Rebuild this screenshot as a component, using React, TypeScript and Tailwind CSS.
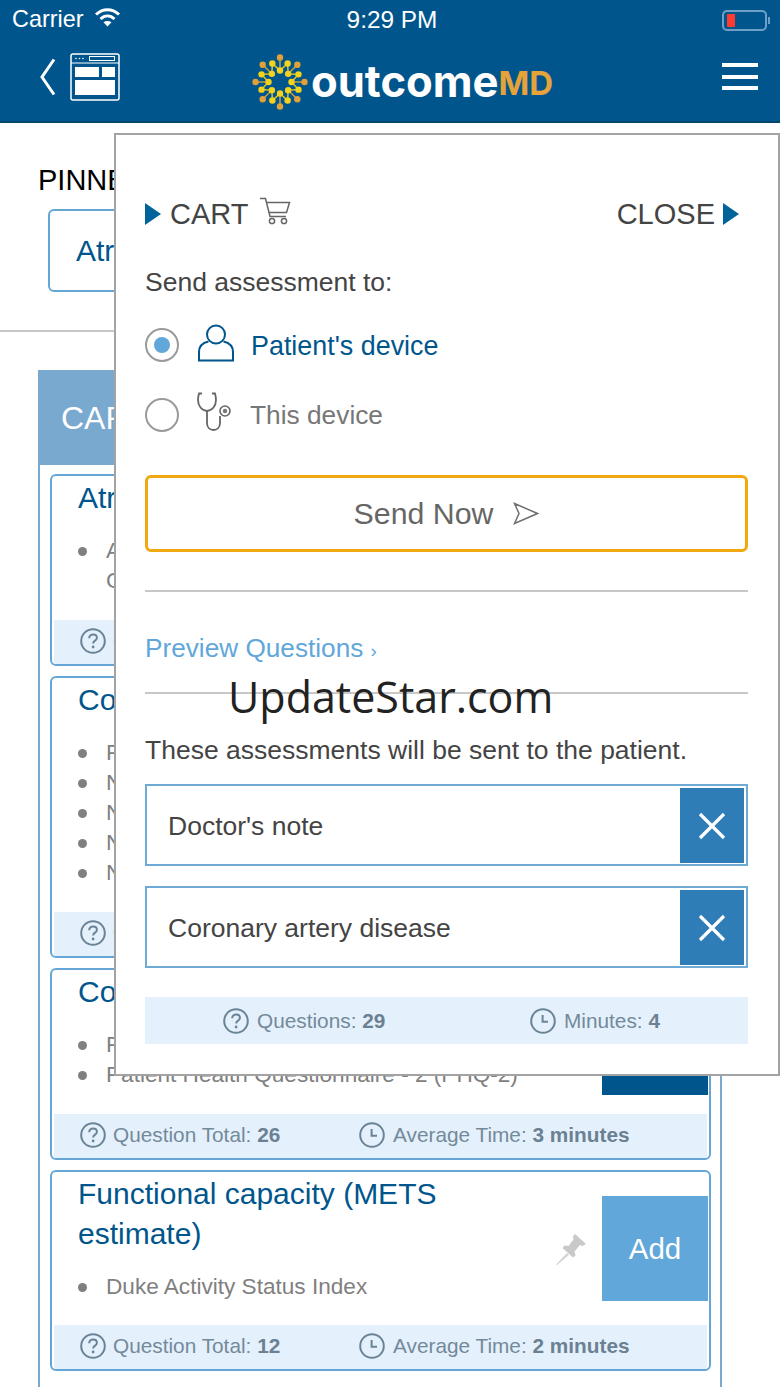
import React from 'react';

const sans = "font-['Liberation_Sans',Arial,sans-serif]";

function Logo() {
  const cx = 30;
  const cy = 30;
  const spots = [0, 1, 2, 3, 4, 5, 6, 7];
  const at = (deg: number, r: number) => {
    const a = ((deg - 90) * Math.PI) / 180;
    return { x: cx + r * Math.cos(a), y: cy + r * Math.sin(a) };
  };
  return (
    <svg width="56" height="56" viewBox="2 2 56 56" className="shrink-0">
      {spots.map((i) => {
        const deg = i * 45;
        const inner = at(deg, 11.5);
        const tip = at(deg, 24.5);
        const left = at(deg - 22.5, 20);
        const right = at(deg + 22.5, 20);
        return (
          <g key={i}>
            <line x1={inner.x} y1={inner.y} x2={tip.x} y2={tip.y} stroke="#e0a63c" strokeWidth="1.3" />
            <line x1={inner.x} y1={inner.y} x2={left.x} y2={left.y} stroke="#f3d21f" strokeWidth="1.3" />
            <line x1={inner.x} y1={inner.y} x2={right.x} y2={right.y} stroke="#f3d21f" strokeWidth="1.3" />
            <circle cx={tip.x} cy={tip.y} r="3.2" fill="#e0a03a" />
            <circle cx={left.x} cy={left.y} r="3.2" fill="#f3d21f" />
            <circle cx={inner.x} cy={inner.y} r="3.2" fill="#f3d21f" />
          </g>
        );
      })}
    </svg>
  );
}

function QuestionIcon() {
  return (
    <svg width="26" height="26" viewBox="0 0 26 26" fill="none" className="shrink-0">
      <circle cx="13" cy="13" r="11.8" stroke="#6b8396" strokeWidth="2" />
      <path d="M9.2 10.2c0-2.2 1.7-3.6 3.9-3.6s3.8 1.3 3.8 3.3c0 2.6-3.8 2.9-3.8 5.6" stroke="#6b8396" strokeWidth="2" />
      <circle cx="13.1" cy="19" r="1.4" fill="#6b8396" />
    </svg>
  );
}

function ClockIcon() {
  return (
    <svg width="26" height="26" viewBox="0 0 26 26" fill="none" className="shrink-0">
      <circle cx="13" cy="13" r="11.8" stroke="#6b8396" strokeWidth="2" />
      <path d="M12.6 7v6.8h5.4" stroke="#6b8396" strokeWidth="2" />
    </svg>
  );
}

function Triangle() {
  return (
    <svg width="16" height="22" viewBox="0 0 16 22" className="shrink-0">
      <path d="M0 0L16 11L0 22Z" fill="#00639a" />
    </svg>
  );
}

function CardFooter({ questions, time }: { questions: string; time: string }) {
  return (
    <div className="mx-[2px] flex h-[44px] items-center bg-[#e4f1fc] pb-[2px] pl-[26px] text-[20.8px] text-[#74899a]">
      <div className="flex w-[279px] items-center gap-[7px]">
        <QuestionIcon />
        <span>
          Question Total: <b className="text-[#6b8193]">{questions}</b>
        </span>
      </div>
      <div className="flex items-center gap-[8px]">
        <ClockIcon />
        <span>
          Average Time: <b className="text-[#6b8193]">{time}</b>
        </span>
      </div>
    </div>
  );
}

function Pin() {
  return (
    <svg width="30" height="32" viewBox="0 0 30 32" className="shrink-0">
      <path d="M19 1L30 11L26.5 13L24 12L18.5 18.5L19.5 22.5L17 24.5L6.5 15L8.5 12.5L12.5 13L17.5 6.5L17 3.5Z" fill="#c9c9c9" />
      <path d="M11 20L0 31.5L1 32L13 22Z" fill="#d4d4d4" />
    </svg>
  );
}

function Card({
  title,
  items,
  questions,
  time,
  button,
  active,
  bottomGap = 'pb-[24px]',
}: {
  title: string;
  items: string[];
  questions: string;
  time: string;
  button: string;
  active?: boolean;
  bottomGap?: string;
}) {
  return (
    <div className="rounded-[6px] border-2 border-[#66a6d6] bg-white">
      <div className="flex items-center pr-[1px] pl-[26px]">
        <div className={`min-w-0 flex-1 pt-[2px] ${bottomGap}`}>
          <h3 className="w-[400px] text-[30px] leading-[40px] text-[#00568c]">{title}</h3>
          <ul className="mt-[18px] text-[22.6px] leading-[30px] text-[#808080]">
            {items.map((item) => (
              <li key={item} className="flex items-start">
                <span className="mt-[11px] mr-[19px] h-[9px] w-[9px] shrink-0 rounded-full bg-[#808080]" />
                <span className="whitespace-pre-line">{item}</span>
              </li>
            ))}
          </ul>
        </div>
        <div className="flex items-center gap-[16px]">
          {!active && <Pin />}
          <button
            className={`h-[105px] w-[106px] pt-[2px] text-[29.5px] text-white ${active ? 'bg-[#00568c]' : 'bg-[#62a7da]'}`}
          >
            {button}
          </button>
        </div>
      </div>
      <CardFooter questions={questions} time={time} />
    </div>
  );
}

function CartItem({ name }: { name: string }) {
  return (
    <div className="flex h-[82px] items-center border-2 border-[#6faad6] pl-[21px] text-[26.5px] text-[#444444]">
      <span className="mt-[4px] flex-1">{name}</span>
      <button className="mt-[1px] mr-[2px] flex h-[75px] w-[64px] items-center justify-center bg-[#2f7db6]">
        <svg width="28" height="28" viewBox="0 0 28 28" fill="none">
          <path d="M2 2L26 26M26 2L2 26" stroke="white" strokeWidth="3.2" />
        </svg>
      </button>
    </div>
  );
}

function CartModal() {
  return (
    <div className="absolute top-[133px] left-[114px] h-[943px] w-[666px] border-2 border-[#a3a3a3] bg-white pt-[59px] pr-[30px] pl-[29px]">
      <div className="flex h-[40px] items-center justify-between pr-[9px] text-[29px] text-[#444444]">
        <div className="flex items-center">
          <Triangle />
          <span className="mt-[2px] mr-[11px] ml-[9px]">CART</span>
          <svg width="32" height="28" viewBox="0 0 32 28" fill="none" className="mt-[-6px]">
            <path d="M1 1.5H6.5L11 19.5H27" stroke="#666" strokeWidth="1.5" />
            <path d="M7.5 5.5H30.5L27.5 15.5H10" stroke="#666" strokeWidth="1.5" />
            <circle cx="13" cy="24" r="2.6" stroke="#666" strokeWidth="1.5" />
            <circle cx="25" cy="24" r="2.6" stroke="#666" strokeWidth="1.5" />
          </svg>
        </div>
        <div className="flex items-center gap-[8px]">
          <span className="mt-[2px]">CLOSE</span>
          <Triangle />
        </div>
      </div>

      <p className="mt-[33px] text-[26.5px] leading-[30px] text-[#444444]">Send assessment to:</p>

      <div className="mt-[28px] flex h-[40px] items-center text-[26.9px] text-[#00568c]">
        <span className="flex h-[34px] w-[34px] items-center justify-center rounded-full border-2 border-[#9a9a9a]">
          <span className="h-[16px] w-[16px] rounded-full bg-[#62a7da]" />
        </span>
        <svg width="38" height="38" viewBox="0 0 38 38" fill="none" className="mt-[-4px] mr-[16px] ml-[18px]">
          <circle cx="19" cy="10.5" r="9" stroke="#00568c" strokeWidth="2" />
          <path d="M11.5 17.5C5 19 2 23 2 28V36.5H36V28C36 23 33 19 26.5 17.5" stroke="#00568c" strokeWidth="2" />
        </svg>
        <span className="mt-[2px]">Patient's device</span>
      </div>

      <div className="mt-[30px] flex h-[40px] items-center text-[26.3px] text-[#777777]">
        <span className="h-[34px] w-[34px] rounded-full border-2 border-[#9a9a9a]" />
        <svg width="36" height="40" viewBox="0 0 36 40" fill="none" className="mt-[-6px] mr-[18px] ml-[17px]">
          <path d="M6 1.5H3C1.5 7 1.5 12 4.5 15.5C6.5 17.8 9 19 11 19C13 19 15.5 17.8 17.5 15.5C20.5 12 20.5 7 19 1.5H16" stroke="#666" strokeWidth="1.8" />
          <path d="M11 19V31C11 35.5 14 38 17.5 38C21 38 24 35.5 24 31V24" stroke="#666" strokeWidth="1.8" />
          <circle cx="29" cy="19" r="5" stroke="#666" strokeWidth="1.6" />
          <circle cx="29" cy="19" r="2.2" fill="#777" />
        </svg>
        <span className="mt-[2px]">This device</span>
      </div>

      <button className="mt-[40px] flex h-[77px] w-full items-center justify-center gap-[20px] rounded-[6px] border-[3px] border-[#f0a911] text-[30.3px] text-[#666666]">
        <span>Send Now</span>
        <svg width="26" height="23" viewBox="0 0 26 23" fill="none">
          <path d="M1.5 1.5L24.5 11.5L1.5 21.5L6 11.5Z" stroke="#707070" strokeWidth="1.5" />
        </svg>
      </button>

      <div className="mt-[38px] h-[2px] bg-[#c8c8c8]" />
      <p className="mt-[41px] text-[26.2px] leading-[30px] text-[#62a7da]">
        Preview Questions <span className="text-[19px]">›</span>
      </p>
      <div className="mt-[26px] h-[2px] bg-[#c8c8c8]" />

      <p className="mt-[41px] text-[26.5px] leading-[30px] text-[#444444]">These assessments will be sent to the patient.</p>

      <div className="mt-[19px] flex flex-col gap-[20px]">
        <CartItem name="Doctor's note" />
        <CartItem name="Coronary artery disease" />
      </div>

      <div className="mt-[29px] flex h-[47px] items-center bg-[#e4f1fc] pl-[78px] text-[20.8px] text-[#74899a]">
        <div className="flex w-[307px] items-center gap-[8px]">
          <QuestionIcon />
          <span>
            Questions: <b className="text-[#6b8193]">29</b>
          </span>
        </div>
        <div className="flex items-center gap-[8px]">
          <ClockIcon />
          <span>
            Minutes: <b className="text-[#6b8193]">4</b>
          </span>
        </div>
      </div>
    </div>
  );
}

function Header() {
  return (
    <header className="h-[123px] border-b-2 border-[#00476f] bg-[#00568c] text-white">
      <div className="flex h-[40px] items-center justify-between pr-[10px] pl-[12px]">
        <div className="flex w-[300px] items-center gap-[11px] text-[23.4px]">
          <span>Carrier</span>
          <svg width="27" height="20" viewBox="0 0 27 20" fill="none" className="mt-[-5px]">
            <path d="M2 7.5C9 1 18 1 25 7.5" stroke="white" strokeWidth="3" />
            <path d="M6.5 12C10.8 8 16.2 8 20.5 12" stroke="white" strokeWidth="3" />
            <path d="M13.5 19.5L9.5 15.2C11.8 13.5 15.2 13.5 17.5 15.2Z" fill="white" />
          </svg>
        </div>
        <span className="ml-[2px] text-[24.4px]">9:29 PM</span>
        <div className="flex w-[300px] items-center justify-end">
          <div className="flex h-[21px] w-[45px] items-center rounded-[5px] border-2 border-[#6fa0c8] pl-[3px]">
            <span className="h-[13px] w-[8px] rounded-[1px] bg-[#ff3b30]" />
          </div>
          <span className="ml-[1px] h-[7px] w-[2px] bg-[#6fa0c8]" />
        </div>
      </div>
      <div className="relative flex h-[73px] items-center justify-between pr-[22px] pl-[39px]">
        <div className="flex items-center gap-[14px]">
          <svg width="17" height="38" viewBox="0 0 17 38" fill="none">
            <path d="M15 1.5L3 19L15 36.5" stroke="white" strokeWidth="3" />
          </svg>
          <svg width="50" height="48" viewBox="0 0 50 48" fill="none">
            <rect x="1" y="1" width="48" height="46" rx="2" stroke="white" strokeWidth="1.5" />
            <path d="M1 10H49" stroke="white" strokeWidth="1" />
            <circle cx="6" cy="5.5" r="0.8" fill="white" />
            <circle cx="9.5" cy="5.5" r="0.8" fill="white" />
            <circle cx="13" cy="5.5" r="0.8" fill="white" />
            <rect x="19.5" y="3.5" width="25" height="4" stroke="white" strokeWidth="1" />
            <rect x="5" y="14" width="24" height="10" fill="white" />
            <rect x="32" y="14" width="13" height="10" fill="white" />
            <rect x="5" y="27" width="40" height="15" fill="white" />
          </svg>
        </div>
        <div className="absolute top-[14px] left-[252px] flex items-start">
          <Logo />
          <span className="ml-[3px] font-['Inter',sans-serif] text-[43.6px] leading-[56px] font-bold">outcome</span>
          <span className="mt-[1px] font-['Inter',sans-serif] text-[33px] leading-[56px] font-bold text-[#e5a33a]">MD</span>
        </div>
        <div className="flex w-[36px] flex-col gap-[7.5px]">
          <span className="h-[4px] bg-white" />
          <span className="h-[4px] bg-white" />
          <span className="h-[4px] bg-white" />
        </div>
      </div>
    </header>
  );
}

export default function App() {
  return (
    <div className={`relative h-[1387px] w-[780px] overflow-hidden bg-white ${sans}`}>
      <Header />

      <section className="pt-[40px]">
        <h2 className="pl-[38px] text-[29px] leading-[34px] text-black">PINNED</h2>
        <div className="mt-[12px] ml-[48px] flex h-[83px] w-[400px] items-center rounded-[6px] border-2 border-[#66a6d6] pl-[26px] text-[30px] text-[#00568c]">
          Atrial fibrillation
        </div>
        <div className="mt-[38px] h-[2px] bg-[#c8c8c8]" />
      </section>

      <section className="mt-[38px] ml-[38px] w-[684px] border-x-2 border-[#79a9cf] pb-[40px]">
        <div className="flex h-[95px] items-center bg-[#79a9cf] pl-[21px] text-[32px] text-white">CARDIOLOGY</div>
        <div className="flex flex-col gap-[10px] pt-[9px] pr-[9px] pl-[10px]">
          <Card
            title="Atrial fibrillation"
            items={['AFib symptom severity\nChecklist']}
            questions="18"
            time="2 minutes"
            button="Add"
          />
          <Card
            title="Congestive heart failure"
            items={['Physical function', 'NYHA class', 'Nutrition', 'Neuropathy', 'Night symptoms']}
            questions="30"
            time="4 minutes"
            button="Add"
          />
          <Card
            title="Coronary artery disease"
            items={['Physical limitation', 'Patient Health Questionnaire - 2 (PHQ-2)']}
            questions="26"
            time="3 minutes"
            button="Remove"
            active
          />
          <Card
            title="Functional capacity (METS estimate)"
            items={['Duke Activity Status Index']}
            questions="12"
            time="2 minutes"
            button="Add"
            bottomGap="pb-[23px]"
          />
        </div>
      </section>

      <CartModal />

      <div className="absolute top-[667px] left-[228px] font-['Open_Sans',sans-serif] text-[43px] leading-[60px] text-[#222222]">
        UpdateStar.com
      </div>
    </div>
  );
}
